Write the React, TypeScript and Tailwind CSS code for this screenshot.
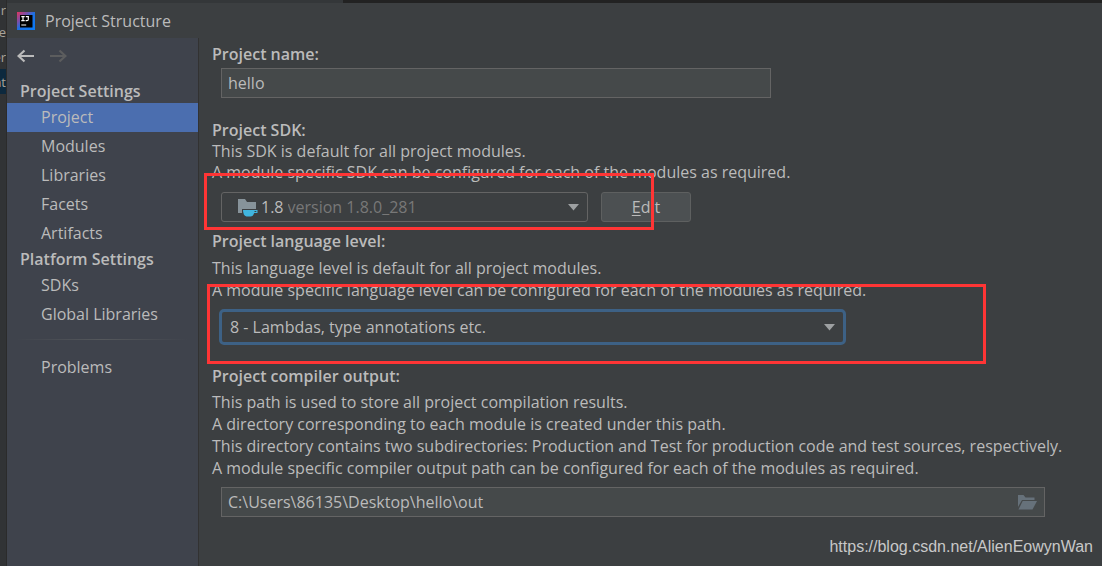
import type { ReactNode } from "react";

const projectItems = ["Project", "Modules", "Libraries", "Facets", "Artifacts"];
const platformItems = ["SDKs", "Global Libraries"];

function NavGroup({ title, items, selected }: { title: string; items: string[]; selected?: string }) {
  return (
    <section>
      <h2 className="h-[23px] pl-[13px] font-semibold leading-[23px]">{title}</h2>
      <ul>
        {items.map((item) => (
          <li key={item}>
            <NavLink active={item === selected}>{item}</NavLink>
          </li>
        ))}
      </ul>
    </section>
  );
}

function NavLink({ active, children }: { active?: boolean; children: ReactNode }) {
  return (
    <a
      href="#"
      className={
        active
          ? "block h-[29px] bg-[#4b6eaf] pl-[34px] leading-[29px]"
          : "block h-[29px] pl-[34px] leading-[29px]"
      }
    >
      {children}
    </a>
  );
}

function Arrow({ flip }: { flip?: boolean }) {
  return (
    <svg width="17" height="14" viewBox="0 0 17 14" fill="none" stroke="currentColor" strokeWidth="2.2">
      {flip ? <path d="M0 7H15.5M9.5 1.5L15.5 7L9.5 12.5" /> : <path d="M17 7H1.5M7.5 1.5L1.5 7L7.5 12.5" />}
    </svg>
  );
}

function Caret() {
  return (
    <svg className="pointer-events-none shrink-0" width="11" height="7" viewBox="0 0 11 7" fill="#9da0a2">
      <path d="M0 0H11L5.5 6.5Z" />
    </svg>
  );
}

function AppLogo() {
  return (
    <svg width="18" height="18" viewBox="0 0 18 18">
      <defs>
        <linearGradient id="logo" x1="0" y1="0" x2="1" y2="1">
          <stop offset="0" stopColor="#e0355f" />
          <stop offset="0.3" stopColor="#7b4fa8" />
          <stop offset="0.5" stopColor="#1f6fe0" />
          <stop offset="1" stopColor="#087cfa" />
        </linearGradient>
      </defs>
      <rect width="18" height="18" fill="url(#logo)" />
      <rect x="3" y="3" width="12.5" height="12.5" fill="#000" />
      <path
        d="M4.3 4.6H7.7M6 4.6V8.6M4.3 8.6H7.7M8.8 4.6H11.3V7.6Q11.3 8.7 10 8.7H8.6M4.3 13H9.2"
        fill="none"
        stroke="#fff"
        strokeWidth="1.2"
      />
    </svg>
  );
}

function SdkIcon() {
  return (
    <svg className="shrink-0" width="20" height="19" viewBox="0 0 20 19">
      <path d="M0 1H7L9 4H18V11H4V15H0Z" fill="#87939a" />
      <path d="M5 12H19.5V15H16.2Q15 18.5 12.5 18.5H8.5Q5 17.5 5 12Z" fill="#40b6e0" />
      <path d="M16.6 13H18.3V14H16.4Z" fill="#3c3f41" />
    </svg>
  );
}

function FolderIcon() {
  return (
    <svg width="19" height="15" viewBox="0 0 19 15" fill="#66717a">
      <path d="M0 0H5.5L7.5 2.5H16.5V5H4L0 12Z" />
      <path d="M4.7 6H19L14.5 14.5H0.5Z" />
    </svg>
  );
}

export default function App() {
  return (
    <div className="flex min-h-screen bg-[#313335] font-['Open_Sans','Noto_Sans',sans-serif] text-[16px] leading-[22px] text-[#bbbbbb]">
      <div className="flex w-[7px] shrink-0 flex-col overflow-hidden border-r border-[#2b2b2b] text-[13px] text-[#a9a49a]">
        <span className="flex h-[19px] items-center justify-end">r</span>
        <span className="flex h-[25px] items-center justify-end">ne</span>
        <span className="flex h-[25px] items-center justify-end">er</span>
        <span className="flex h-[25px] items-center justify-end bg-[#0d293e]">at</span>
      </div>

      <div className="flex min-w-0 flex-1 flex-col">
        <div className="flex h-[3px] shrink-0">
          <div className="w-[336px] bg-[#343739]" />
          <div className="flex-1 bg-[#222222]" />
        </div>

        <div className="flex flex-1 flex-col bg-[#3c3f41]">
          <header className="flex h-[35px] shrink-0 items-center gap-[10px] pl-[10px]">
            <AppLogo />
            <h1>Project Structure</h1>
          </header>

          <div className="flex flex-1">
            <nav className="w-[192px] shrink-0 border-r border-[#323232] bg-[#3f434c]">
              <div className="flex h-[42px] gap-4 pl-[10px] pt-[11px]">
                <button aria-label="Back" className="h-[14px] text-[#bbbbbb]">
                  <Arrow />
                </button>
                <button aria-label="Forward" className="h-[14px] text-[#5c5d5e]" disabled>
                  <Arrow flip />
                </button>
              </div>
              <NavGroup title="Project Settings" items={projectItems} selected="Project" />
              <NavGroup title="Platform Settings" items={platformItems} />
              <div className="mx-[10px] mb-[13px] mt-[10px] h-px bg-linear-to-r from-transparent via-[#55585c] to-transparent" />
              <NavLink>Problems</NavLink>
            </nav>

            <main className="relative min-w-0 flex-1 pl-[13px] pt-[5px]">
              <label htmlFor="name" className="block font-semibold">
                Project name:
              </label>
              <input
                id="name"
                defaultValue="hello"
                className="ml-[9px] mt-[3px] block h-[30px] w-full max-w-[550px] border border-[#646464] bg-[#45494a] px-[6px] outline-none"
              />

              <label htmlFor="sdk" className="mt-[21px] block font-semibold">
                Project SDK:
              </label>
              <div className="leading-[21px]">
                <p>This SDK is default for all project modules.</p>
                <p>A module specific SDK can be configured for each of the modules as required.</p>
              </div>
              <div className="ml-[9px] mt-[9px] flex gap-[13px]">
                <div className="flex h-[30px] w-[367px] items-center rounded-[3px] border border-[#646464] pl-4 pr-2">
                  <SdkIcon />
                  <span className="ml-[3px]">1.8</span>
                  <select id="sdk" className="ml-1 min-w-0 flex-1 appearance-none bg-transparent text-[#787878] outline-none">
                    <option>version 1.8.0_281</option>
                  </select>
                  <Caret />
                </div>
                <button className="h-[30px] w-[90px] rounded-[3px] border border-[#5e6060] bg-[#4c5052]">
                  <span className="underline underline-offset-2">E</span>dit
                </button>
              </div>

              <label htmlFor="level" className="mt-[8px] block font-semibold">
                Project language level:
              </label>
              <div className="mt-[5px] leading-[22px]">
                <p>This language level is default for all project modules.</p>
                <p>A module specific language level can be configured for each of the modules as required.</p>
              </div>
              <div className="ml-[7px] mt-[8px] flex h-[36px] w-[627px] items-center rounded-[5px] border-[3px] border-[#3d6185] pl-2 pr-2">
                <select id="level" className="min-w-0 flex-1 appearance-none bg-transparent outline-none">
                  <option>8 - Lambdas, type annotations etc.</option>
                </select>
                <Caret />
              </div>

              <label htmlFor="output" className="mt-[20px] block font-semibold">
                Project compiler output:
              </label>
              <div className="mt-[4px] leading-[22px]">
                <p>This path is used to store all project compilation results.</p>
                <p>A directory corresponding to each module is created under this path.</p>
                <p>This directory contains two subdirectories: Production and Test for production code and test sources, respectively.</p>
                <p>A module specific compiler output path can be configured for each of the modules as required.</p>
              </div>
              <div className="ml-[9px] mt-[8px] flex h-[30px] max-w-[824px] items-center border border-[#646464] bg-[#45494a] pl-[6px] pr-[7px]">
                <input id="output" defaultValue="C:\Users\86135\Desktop\hello\out" className="min-w-0 flex-1 bg-transparent outline-none" />
                <button aria-label="Browse">
                  <FolderIcon />
                </button>
              </div>

              <div className="pointer-events-none absolute left-[5px] top-[135px] h-[57px] w-[450px] border-[3px] border-[#ff3535]" />
              <div className="pointer-events-none absolute left-[8px] top-[246px] h-[80px] w-[779px] border-[3px] border-[#ff3535]" />
              <a
                href="https://blog.csdn.net/AlienEowynWan"
                className="absolute bottom-2 right-[9px] font-['Liberation_Sans',sans-serif] text-[#c8c8c8]"
              >
                https://blog.csdn.net/AlienEowynWan
              </a>
            </main>
          </div>
        </div>
      </div>
    </div>
  );
}
